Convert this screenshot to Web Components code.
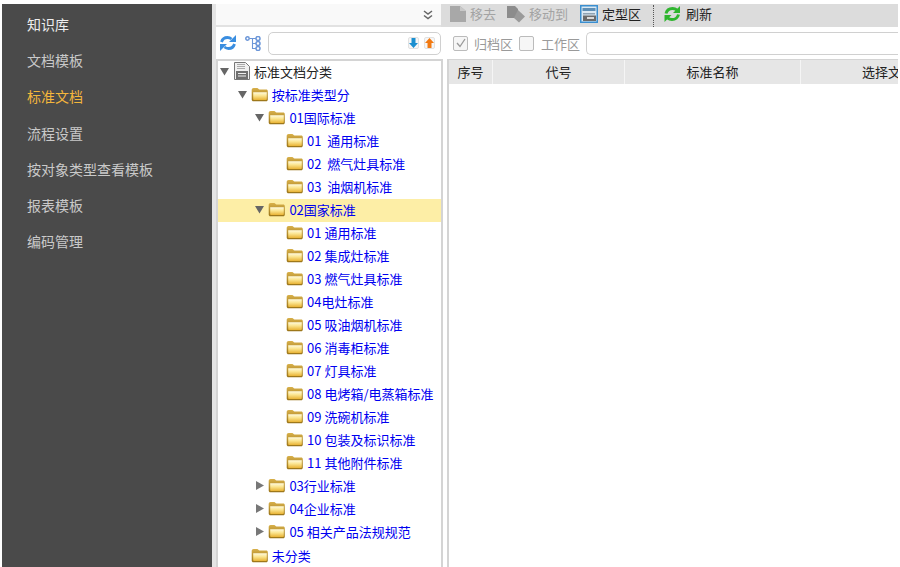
<!DOCTYPE html>
<html lang="zh"><head><meta charset="utf-8"><title>标准文档</title>
<style>
html,body{margin:0;height:100%;background:#fff;overflow:hidden}
body{font:13px "Noto Sans CJK SC","Liberation Sans",sans-serif}
</style></head><body>
<app-shell>
  <side-nav slot="nav">
    <nav-item bright>知识库</nav-item><nav-item>文档模板</nav-item><nav-item active>标准文档</nav-item><nav-item>流程设置</nav-item><nav-item>按对象类型查看模板</nav-item><nav-item>报表模板</nav-item><nav-item>编码管理</nav-item>
  </side-nav>
  <collapse-bar slot="collapse"></collapse-bar>
  <main-toolbar slot="toolbar"></main-toolbar>
  <tree-search slot="search"></tree-search>
  <filter-bar slot="filter"></filter-bar>
  <tree-panel slot="tree">
    <tree-node lv="0" arrow="down" icon="doc" dark>标准文档分类</tree-node>
    <tree-node lv="1" arrow="down">按标准类型分</tree-node>
    <tree-node lv="2" arrow="down">01国际标准</tree-node>
    <tree-node lv="3">01  通用标准</tree-node>
    <tree-node lv="3">02  燃气灶具标准</tree-node>
    <tree-node lv="3">03  油烟机标准</tree-node>
    <tree-node lv="2" arrow="down" selected>02国家标准</tree-node>
    <tree-node lv="3">01 通用标准</tree-node>
    <tree-node lv="3">02 集成灶标准</tree-node>
    <tree-node lv="3">03 燃气灶具标准</tree-node>
    <tree-node lv="3">04电灶标准</tree-node>
    <tree-node lv="3">05 吸油烟机标准</tree-node>
    <tree-node lv="3">06 消毒柜标准</tree-node>
    <tree-node lv="3">07 灯具标准</tree-node>
    <tree-node lv="3">08 电烤箱/电蒸箱标准</tree-node>
    <tree-node lv="3">09 洗碗机标准</tree-node>
    <tree-node lv="3">10 包装及标识标准</tree-node>
    <tree-node lv="3">11 其他附件标准</tree-node>
    <tree-node lv="2" arrow="right">03行业标准</tree-node>
    <tree-node lv="2" arrow="right">04企业标准</tree-node>
    <tree-node lv="2" arrow="right">05 相关产品法规规范</tree-node>
    <tree-node lv="1">未分类</tree-node>
  </tree-panel>
  <data-table slot="table"></data-table>
</app-shell>
<script>
function def(name,html,init){
  customElements.define(name,class extends HTMLElement{
    constructor(){super();this.attachShadow({mode:'open'}).innerHTML=html;}
    connectedCallback(){if(init)init(this);}
  });
}
def('app-shell',`<style>
:host{display:grid;box-sizing:border-box;height:567px;width:900px;padding:4px 2px 0;
grid-template-columns:210px 4px 225px 6px 1fr;grid-template-rows:23px 32px 1fr;background:#fff;overflow:hidden;color:#333}
.gut{grid-column:2;grid-row:1/4;background:#e4e4e4}
::slotted(*){min-width:0}
.w{display:contents}
</style>
<div class="w"><slot name="nav"></slot></div>
<div class="gut"></div>
<div class="w"><slot name="collapse"></slot></div>
<div class="w"><slot name="toolbar"></slot></div>
<div class="w"><slot name="search"></slot></div>
<div class="w"><slot name="filter"></slot></div>
<div class="w"><slot name="tree"></slot></div>
<div class="w"><slot name="table"></slot></div>`);
def('side-nav',`<style>:host{grid-column:1;grid-row:1/4;display:flex;flex-direction:column;background:#4a4a4a;padding-top:2px;box-sizing:border-box}</style><slot></slot>`);
def('nav-item',`<style>:host{display:flex;align-items:center;height:36.2px;padding-left:25px;font-size:14px;color:#c9c9c9;white-space:nowrap}
:host([active]){color:#f4b63c}:host([bright]){color:#eee}</style><slot></slot>`);
def('collapse-bar',`<style>:host{grid-column:3;grid-row:1;display:flex;justify-content:flex-end;align-items:center;background:#f9f9f9;border-bottom:2px solid #e2e2e2;padding-right:8px;box-sizing:border-box;height:23px}svg{display:block}</style>
<svg width="10" height="10" viewBox="0 0 10 10" fill="none" stroke="#666" stroke-width="1.500"><path d="M1 1l4 3 4-3M1 5.500l4 3 4-3"/></svg>`);
const tbItem=(icon,label,dis)=>`<span class="i ${dis?'dis':''}">${icon}<span class="t">${label}</span></span>`;
def('main-toolbar',`<style>:host{grid-column:4/6;grid-row:1;display:flex;align-items:center;background:#dcdcdc;height:23px;padding:0 0 4px 9px;box-sizing:border-box;font-size:13px;color:#222;white-space:nowrap}
.i{display:flex;align-items:center;gap:4px}.dis{color:#a3a3a3}.t{padding-bottom:1px}
svg{display:block;flex:none}
.sp1{width:11px}.sp2{width:12px}
.sep{width:0;height:22px;margin:4px 10px 0 12px;border-left:1px dotted #555}
</style>
${tbItem('<svg width="16" height="18" viewBox="0 0 16 18"><path d="M0 1h10l6 5v11H0z" fill="#a8a8a8"/><path d="M10 1l6 5h-6z" fill="#c8c8c8"/></svg>','移去',1)}
<span class="sp1"></span>
${tbItem('<svg width="18" height="18" viewBox="0 0 18 18"><path d="M0 1h8l3 3v9H0z" fill="#8c8c8c"/><path d="M11 5l7 6.500-6 6-5-4.500z" fill="#9a9a9a"/></svg>','移动到',1)}
<span class="sp2"></span>
${tbItem('<svg width="18" height="18" viewBox="0 0 18 18"><rect x=".75" y=".75" width="16.500" height="16.500" fill="#dbe9f3" stroke="#3b8fd0" stroke-width="1.500"/><rect x="2.500" y="3" width="13" height="3" fill="#5f8fb5"/><rect x="3" y="8" width="12" height="1.500" fill="#8fa3b3"/><rect x="3" y="10.500" width="13" height="5.500" fill="#6b6b6b"/><rect x="7" y="12" width="7" height="2" fill="#d9d9d9"/></svg>','定型区',0)}
<span class="sep"></span>
${tbItem('<svg width="18" height="16" viewBox="0 0 18 16" fill="none" stroke="#2fb52f" stroke-width="3"><path d="M2 7.500C3 3.500 6 2.500 8.500 2.500c1.500 0 3 .4 4.500 1.700"/><path d="M14.500 8.500c-1 4-4 5-6.500 5-1.500 0-3-.4-4.500-1.700"/><path d="M16 0v7h-7z" fill="#2fb52f" stroke="none"/><path d="M.5 16V9h7z" fill="#2fb52f" stroke="none"/></svg>','刷新',0)}`);
def('tree-search',`<style>:host{grid-column:3;grid-row:2;display:flex;align-items:center;padding-left:4px;box-sizing:border-box;background:#fff}
svg{display:block;flex:none}
.b{flex:1;height:23px;box-sizing:border-box;border:1px solid #d0d0d0;border-radius:5px;background:#fff;display:flex;justify-content:flex-end;align-items:center;gap:5px;padding-right:5px;margin-left:6px}
.k{width:11px;height:12px;box-sizing:border-box;border:1px solid #e2e2e2;border-radius:2px;background:#f6f6f6;display:flex;align-items:center;justify-content:center}
</style>
<svg width="16" height="16" viewBox="0 0 16 16" fill="none" stroke="#3a8ee0" stroke-width="2.800"><path d="M1.500 7C2.500 3.500 5 2.500 7.500 2.500c1.500 0 2.700.4 4 1.500"/><path d="M14.500 9c-1 3.500-3.500 4.500-6 4.500-1.500 0-2.700-.4-4-1.500"/><path d="M16 0v7H9z" fill="#3a8ee0" stroke="none"/><path d="M0 16V9h7z" fill="#3a8ee0" stroke="none"/></svg>
<svg style="margin-left:9px" width="17" height="15" viewBox="0 0 17 15" fill="none" stroke="#6b96d8" stroke-width="1.500"><circle cx="2.500" cy="2.500" r="1.700"/><circle cx="13" cy="2.500" r="2"/><circle cx="13" cy="7.500" r="2"/><circle cx="13" cy="12.500" r="2"/><path d="M4.500 2.500h6.500M7.500 2.500v10H11M7.500 7.500H11" stroke-width="1.100"/></svg>
<div class="b"><span class="k"><svg width="9" height="10" viewBox="0 0 9 10"><path d="M2.500 0h4v5H9L4.500 10 0 5h2.500z" fill="#1b8fd0"/></svg></span><span class="k"><svg width="9" height="10" viewBox="0 0 9 10"><path d="M2.500 10h4V5H9L4.500 0 0 5h2.500z" fill="#f27a12"/></svg></span></div>`);
def('filter-bar',`<style>:host{grid-column:4/6;grid-row:2;display:flex;align-items:center;padding-left:12px;box-sizing:border-box;color:#9a9a9a;font-size:13px;white-space:nowrap;background:#fff}
.c{width:15px;height:15px;box-sizing:border-box;border:1px solid #bbb;border-radius:2px;background:#f6f6f6;margin-right:6px;flex:none;display:flex;align-items:center;justify-content:center}
.c2{margin-left:6px;margin-right:7px}
.b{flex:1;height:23px;box-sizing:border-box;border:1px solid #d0d0d0;border-right:0;border-radius:5px 0 0 5px;margin-left:6px}
svg{display:block}</style>
<span class="c"><svg width="10" height="10" viewBox="0 0 10 10" fill="none" stroke="#999" stroke-width="1.300"><path d="M1 5l3 3.500L9 1"/></svg></span><span>归档区</span>
<span class="c c2"></span><span>工作区</span><span class="b"></span>`);
def('tree-panel',`<style>:host{grid-column:3/5;grid-row:3;display:block;box-sizing:border-box;width:227px;background:#fff;border:2px solid #d4d4d4;border-bottom:0;overflow:hidden}
::slotted(:first-child){margin-top:-.5px}
</style><slot></slot>`);
const folder=`<svg width="18" height="15" viewBox="0 0 18 15"><defs><linearGradient id="g" x1="0" y1="0" x2="0" y2="1"><stop offset="0" stop-color="#fffbe0"/><stop offset=".45" stop-color="#fbe590"/><stop offset="1" stop-color="#e9b335"/></linearGradient><linearGradient id="o" x1="0" y1="0" x2="0" y2="1"><stop offset="0" stop-color="#d8b04a"/><stop offset="1" stop-color="#9a7417"/></linearGradient></defs><path d="M.7 12.500V3C.7 1.800 1.500 1 2.600 1h3.600c1 0 1.400 1.300 2.400 1.600h6.500c1.100 0 1.700.7 1.700 1.600v8.300c0 1-.7 1.800-1.700 1.800H2.500C1.400 14.300.7 13.500.7 12.500z" fill="url(#o)"/><path d="M2.200 5.200h13.600v7c0 .6-.3.800-.8.800H3c-.5 0-.8-.2-.8-.8z" fill="url(#g)"/></svg>`;
const doc=`<svg width="16" height="18" viewBox="0 0 16 18"><path d="M.5.500h11L15.500 4.500V17.500H.5z" fill="#f0f0f0" stroke="#777"/><rect x="3" y="2" width="8" height="1" fill="#aaa"/><rect x="3" y="4" width="8" height="1" fill="#aaa"/><rect x="3" y="6" width="8" height="1" fill="#aaa"/><rect x="2" y="9" width="12" height="8" fill="#6f6f6f"/><rect x="4" y="11" width="8" height="1" fill="#eee"/><rect x="4" y="13.500" width="8" height="1" fill="#eee"/></svg>`;
def('tree-node',`<style>:host{display:flex;align-items:center;height:23.05px;box-sizing:border-box;padding-left:calc(var(--lv,0)*17.7px);padding-bottom:2px;color:#0000f0;font-size:13px;white-space:pre}
:host([selected]){background:#fdeea6}:host([dark]){color:#222}
.a{width:15px;flex:none;display:flex;justify-content:flex-start;padding-left:2px;box-sizing:border-box}
.ic{width:18px;height:18px;flex:none;display:flex;align-items:center;justify-content:center;margin-right:3px}
svg{display:block}</style><span class="a"></span><span class="ic"></span><slot></slot>`,el=>{
  el.style.setProperty('--lv',el.getAttribute('lv')||0);
  const a=el.getAttribute('arrow');
  const s=el.shadowRoot;
  if(a==='down')s.querySelector('.a').innerHTML='<svg width="9" height="9" viewBox="0 0 9 9"><path d="M0 1h9L4.500 8.500z" fill="#666"/></svg>';
  if(a==='right')s.querySelector('.a').innerHTML='<svg width="9" height="9" viewBox="0 0 9 9"><path d="M1 0l8 4.500L1 9z" fill="#777"/></svg>';
  s.querySelector('.ic').innerHTML=el.getAttribute('icon')==='doc'?doc:folder;
});
def('data-table',`<style>:host{grid-column:5;grid-row:3;display:block;box-sizing:border-box;background:#fff;border-left:2px solid #d4d4d4;border-top:1px solid #d4d4d4;overflow:hidden}
.h{display:grid;grid-template-columns:43px 131px 175px 1fr;gap:1px;height:24px;background:#f5f5f5;color:#222;font-size:13px}
.h span{background:#e6e6e6;display:flex;align-items:center;justify-content:center;white-space:nowrap;overflow:hidden;padding-bottom:1px;box-sizing:border-box}
.h .last{justify-content:flex-start;padding-left:61px}</style>
<div class="h"><span>序号</span><span>代号</span><span>标准名称</span><span class="last">选择文档</span></div>`);
</script>
</body></html>
